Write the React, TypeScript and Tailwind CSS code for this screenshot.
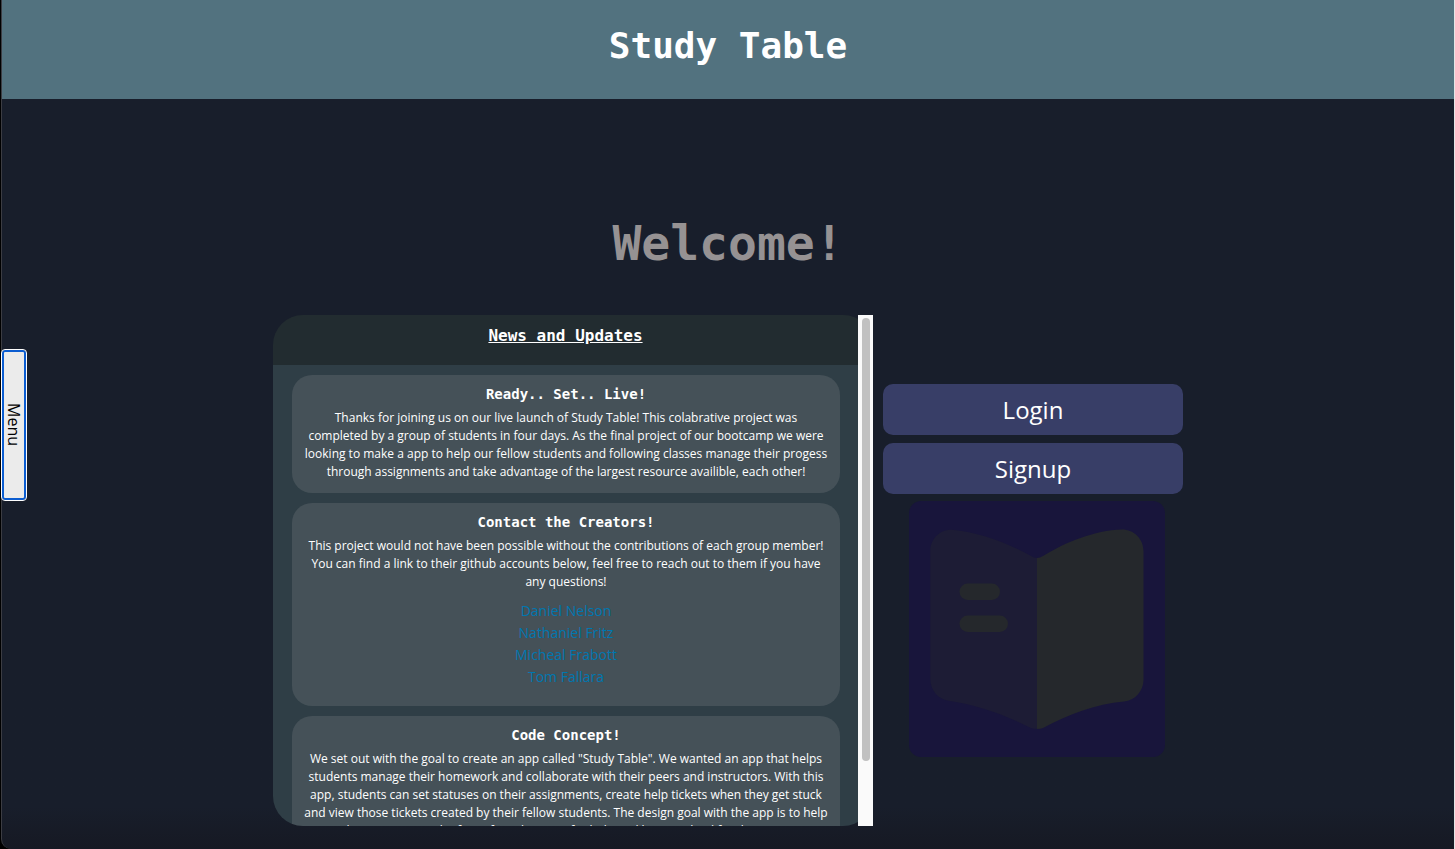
import type { ReactNode } from "react";

const mono = "font-['DejaVu_Sans_Mono','Liberation_Mono',monospace] font-bold";

const creators = [
  { name: "Daniel Nelson", href: "#daniel-nelson" },
  { name: "Nathaniel Fritz", href: "#nathaniel-fritz" },
  { name: "Micheal Frabott", href: "#micheal-frabott" },
  { name: "Tom Fallara", href: "#tom-fallara" },
];

function NewsCard({ title, text, children }: { title: string; text: string; children?: ReactNode }) {
  return (
    <article className="rounded-[20px] bg-[#455158] px-3 pt-2.5 pb-3 text-center text-white">
      <h3 className={`${mono} text-[14px] leading-[18px]`}>{title}</h3>
      <p className="mt-1.5 text-[12px] leading-[18px]">{text}</p>
      {children}
    </article>
  );
}

function BookLogo() {
  return (
    <svg viewBox="0 0 256 256" className="ml-2 size-64 self-center" role="img" aria-label="Open book">
      <rect width="256" height="256" rx="12" fill="#18153b" />
      <path
        d="M128 57 Q125 57 122 55 C99 42 70 31 43 28.7 C31 28 21.3 38 21.3 50 V178 C21.3 190 30 199 41 200 C69 204 96 214 122 227 Q125 228 128 228 Z"
        fill="#1d1c35"
      />
      <path
        d="M128 57 Q131 57 134 55 C157 41 185 29.5 213 28.5 C225 28.5 234.5 38 234.5 50 V179 C234.5 190 226 199.500 215 200.500 C187 203 158 214 134 227 Q131 228 128 228 Z"
        fill="#25282c"
      />
      <rect x="50.500" y="82.500" width="40.500" height="16.500" rx="8.250" fill="#25282c" />
      <rect x="50.500" y="114.500" width="48.500" height="16.500" rx="8.250" fill="#25282c" />
    </svg>
  );
}

export default function App() {
  return (
    <div className="bg-black pl-px font-['Open_Sans','Noto_Sans',sans-serif]">
      <div className="relative flex min-h-screen flex-col rounded-bl-[10px] border-r border-l border-r-[#e5e5e5] border-l-[#3c3d43] bg-linear-to-b from-[#181e2b] from-95% to-[#161923]">
        <header className="flex h-[99px] justify-center bg-[#52727f] pt-[25px]">
          <h1 className={`${mono} text-[36px] leading-[42px] text-white`}>Study Table</h1>
        </header>

        <button
          type="button"
          className="absolute top-1/2 left-0 h-[150px] w-6 -translate-y-1/2 rounded-[3px] border-2 border-[#0b5cd0] bg-[#ebebeb] text-[16px] leading-5 text-black outline outline-white [writing-mode:vertical-rl]"
        >
          Menu
        </button>

        <main className="flex flex-1 flex-col items-center">
          <h2 className={`${mono} mt-[114px] text-[48px] leading-[60px] text-[#969293]`}>Welcome!</h2>

          <div className="mt-[42px] mb-[23px] flex items-center gap-2.5">
            <section className="grid h-[511px] w-[600px]" aria-label="News and Updates">
              <div className="col-start-1 row-start-1 h-[511px] overflow-y-auto rounded-[30px] bg-[#2f3e46] [scrollbar-width:none]">
                <div className="h-[50px] bg-[#222c30] pt-[11px] pr-[15px] text-center">
                  <h2 className={`${mono} text-[16px] leading-5 text-white underline`}>News and Updates</h2>
                </div>
                <div className="flex flex-col gap-2.5 py-2.5 pr-[33px] pl-[19px]">
                  <NewsCard
                    title="Ready.. Set.. Live!"
                    text="Thanks for joining us on our live launch of Study Table! This colabrative project was completed by a group of students in four days. As the final project of our bootcamp we were looking to make a app to help our fellow students and following classes manage their progess through assignments and take advantage of the largest resource availible, each other!"
                  />
                  <NewsCard
                    title="Contact the Creators!"
                    text="This project would not have been possible without the contributions of each group member! You can find a link to their github accounts below, feel free to reach out to them if you have any questions!"
                  >
                    <ul className="mt-[9px] mb-1.5 text-[14px] leading-[22px] text-[#0077b0]">
                      {creators.map((creator) => (
                        <li key={creator.name}>
                          <a href={creator.href}>{creator.name}</a>
                        </li>
                      ))}
                    </ul>
                  </NewsCard>
                  <NewsCard
                    title="Code Concept!"
                    text={
                      'We set out with the goal to create an app called "Study Table". We wanted an app that helps students manage their homework and collaborate with their peers and instructors. With this app, students can set statuses on their assignments, create help tickets when they get stuck and view those tickets created by their fellow students. The design goal with the app is to help students overcome the fear of reaching out for help and being judged for their current'
                    }
                  />
                </div>
              </div>
              <div className="z-10 col-start-1 row-start-1 flex w-[15px] justify-center justify-self-end bg-[#fafafa] py-[3px]">
                <div className="h-[443px] w-2 rounded-full bg-[#c1c1c1]" />
              </div>
            </section>

            <aside className="flex w-[300px] flex-col">
              <button type="button" className="h-[51px] rounded-[10px] bg-[#383e67] text-[24px] leading-8 text-white">
                Login
              </button>
              <button type="button" className="mt-2 mb-[7px] h-[51px] rounded-[10px] bg-[#383e67] text-[24px] leading-8 text-white">
                Signup
              </button>
              <BookLogo />
            </aside>
          </div>
        </main>
      </div>
    </div>
  );
}
